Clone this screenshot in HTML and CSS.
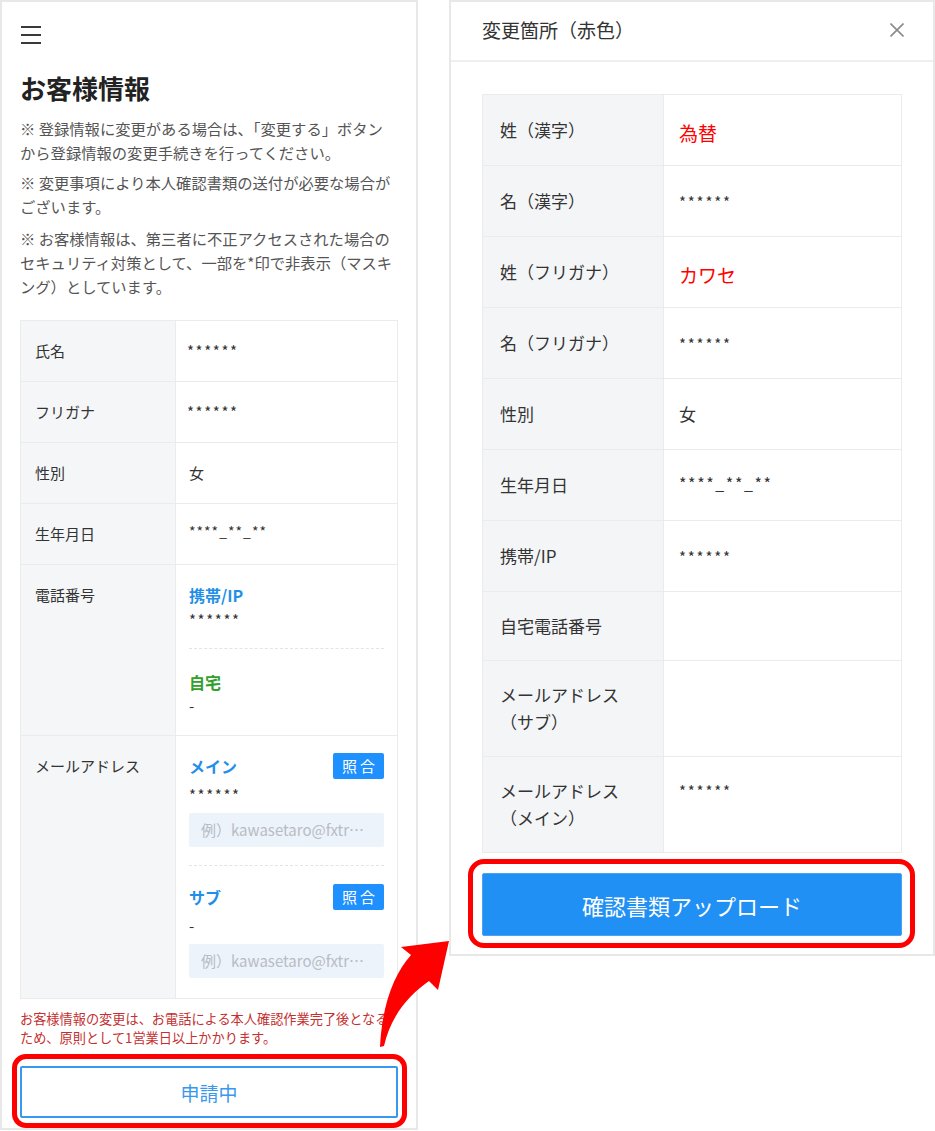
FILE: index.html
```html
<!DOCTYPE html>
<html lang="ja">
<head>
<meta charset="utf-8">
<title>お客様情報</title>
<link rel="stylesheet" href="styles.css">
</head>
<body>
<div class="page">
  <section class="panel panel-left">
    <div class="hamburger"><span></span><span></span><span></span></div>
    <h1 class="title">お客様情報</h1>
    <p class="note">※ 登録情報に変更がある場合は、「変更する」ボタンから登録情報の変更手続きを行ってください。</p>
    <p class="note note-2">※ 変更事項により本人確認書類の送付が必要な場合がございます。</p>
    <p class="note note-3">※ お客様情報は、第三者に不正アクセスされた場合のセキュリティ対策として、一部を*印で非表示（マスキング）としています。</p>

    <div class="info">
      <div class="row">
        <div class="lbl">氏名</div>
        <div class="val"><span class="mask">******</span></div>
      </div>
      <div class="row">
        <div class="lbl">フリガナ</div>
        <div class="val"><span class="mask">******</span></div>
      </div>
      <div class="row">
        <div class="lbl">性別</div>
        <div class="val val-plain">女</div>
      </div>
      <div class="row">
        <div class="lbl">生年月日</div>
        <div class="val val-plain"><span class="mask-small">****_**_**</span></div>
      </div>
      <div class="row">
        <div class="lbl">電話番号</div>
        <div class="val val-group">
          <div class="sub-head blue">携帯/IP</div>
          <div class="sub-val mask phone-val">******</div>
          <div class="divider"></div>
          <div class="sub-head green">自宅</div>
          <div class="sub-val">-</div>
        </div>
      </div>
      <div class="row">
        <div class="lbl">メールアドレス</div>
        <div class="val val-group val-mail">
          <div class="sub-head blue mail-head"><span>メイン</span><span class="chip">照合</span></div>
          <div class="sub-val mask mail-val">******</div>
          <div class="field">例）kawasetaro@fxtr…</div>
          <div class="divider divider-mail"></div>
          <div class="sub-head blue mail-head"><span>サブ</span><span class="chip">照合</span></div>
          <div class="sub-val mail-val">-</div>
          <div class="field">例）kawasetaro@fxtr…</div>
        </div>
      </div>
    </div>

    <p class="warn">お客様情報の変更は、お電話による本人確認作業完了後となるため、原則として1営業日以上かかります。</p>

    <div class="hl hl-left">
      <button class="btn-outline" type="button">申請中</button>
    </div>
  </section>

  <section class="panel panel-right">
    <header class="modal-head">
      <span class="modal-title">変更箇所（赤色）</span>
      <svg class="close" width="14" height="14" viewBox="0 0 14 14" aria-hidden="true">
        <path d="M0.5 0.5 L13.5 13.5 M13.5 0.5 L0.5 13.5" stroke="#8a8a8a" stroke-width="1.6" fill="none"/>
      </svg>
    </header>
    <div class="modal-body">
      <div class="diff">
        <div class="drow">
          <div class="dlbl">姓（漢字）</div>
          <div class="dval changed">為替</div>
        </div>
        <div class="drow">
          <div class="dlbl">名（漢字）</div>
          <div class="dval"><span class="mask">******</span></div>
        </div>
        <div class="drow">
          <div class="dlbl">姓（フリガナ）</div>
          <div class="dval changed">カワセ</div>
        </div>
        <div class="drow">
          <div class="dlbl">名（フリガナ）</div>
          <div class="dval"><span class="mask">******</span></div>
        </div>
        <div class="drow">
          <div class="dlbl">性別</div>
          <div class="dval">女</div>
        </div>
        <div class="drow">
          <div class="dlbl">生年月日</div>
          <div class="dval"><span class="mask-small">****_**_**</span></div>
        </div>
        <div class="drow">
          <div class="dlbl">携帯/IP</div>
          <div class="dval"><span class="mask">******</span></div>
        </div>
        <div class="drow drow-short">
          <div class="dlbl">自宅電話番号</div>
          <div class="dval"></div>
        </div>
        <div class="drow drow-two">
          <div class="dlbl">メールアドレス<br>（サブ）</div>
          <div class="dval"></div>
        </div>
        <div class="drow drow-two">
          <div class="dlbl">メールアドレス<br>（メイン）</div>
          <div class="dval"><span class="mask">******</span></div>
        </div>
      </div>
      <div class="hl hl-right">
        <button class="btn-primary" type="button">確認書類アップロード</button>
      </div>
    </div>
  </section>

  <svg class="arrow" width="935" height="1131" viewBox="0 0 935 1131" aria-hidden="true">
    <path d="M380 1047 C382 1005 394 974 411 955 L401 947 L449 941 L438 990 L429 981 C410 994 391 1015 384 1046 Z" fill="#ff0000"/>
  </svg>
</div>
</body>
</html>
```

FILE: styles.css
```css
* {
  box-sizing: border-box;
}

html, body {
  margin: 0;
  padding: 0;
  background: #ffffff;
}

body {
  font-family: "Noto Sans CJK JP", "Noto Sans", sans-serif;
  color: #333333;
}

.page {
  position: relative;
  width: 935px;
  height: 1131px;
  display: flex;
  align-items: flex-start;
  overflow: hidden;
}

.panel {
  border: 2px solid #e8e8e8;
  background: #ffffff;
}

/* ---------- left panel ---------- */
.panel-left {
  width: 418px;
  flex: none;
  padding: 0 18px 10px 18px;
}

.hamburger {
  margin-top: 24px;
  margin-left: 1px;
  width: 20px;
  display: flex;
  flex-direction: column;
  gap: 6px;
}

.hamburger span {
  display: block;
  height: 2px;
  background: #3a3a3a;
}

.title {
  margin: 26px 0 0 0;
  font-size: 26px;
  line-height: 36px;
  font-weight: 700;
  color: #222222;
}

.note {
  margin: 10px 0 0 0;
  font-size: 15.3px;
  line-height: 24px;
  color: #555555;
}

.note-2 {
  margin-top: 6px;
}

.note-3 {
  margin-top: 8px;
}

.info {
  margin-top: 22px;
  border: 1px solid #ebebeb;
}

.row {
  display: grid;
  grid-template-columns: 155px minmax(0, 1fr);
  border-top: 1px solid #ebebeb;
}

.row:first-child {
  border-top: none;
}

.lbl {
  background: #f5f6f8;
  border-right: 1px solid #ebebeb;
  padding: 19px 8px 19px 14px;
  font-size: 15px;
  line-height: 22px;
  color: #333333;
}

.val {
  min-width: 0;
  padding: 19px 13px 19px 11px;
  font-size: 15px;
  line-height: 22px;
  color: #333333;
}

.val-plain {
  padding-left: 13px;
}

.mask {
  letter-spacing: 1.6px;
}

.mask-small {
  font-size: 14px;
  line-height: 1;
  letter-spacing: 1px;
  position: relative;
  top: -3px;
}

.val-group {
  padding: 19px 13px 17px 13px;
}

.sub-head {
  font-size: 16px;
  line-height: 22px;
  font-weight: 700;
}

.blue {
  color: #1f8fe8;
}

.green {
  color: #33a02c;
}

.sub-val {
  margin-top: 1px;
  line-height: 24px;
  font-size: 15px;
  color: #333333;
}

.phone-val {
  margin-top: 2px;
}

.divider {
  margin: 16px 0 22px 0;
  border-top: 1px dashed #e4e4e4;
}

.val-mail {
  padding-bottom: 20px;
}

.mail-head {
  height: 22px;
  display: flex;
  align-items: center;
  justify-content: space-between;
}

.chip {
  width: 51px;
  height: 26px;
  flex: none;
  display: flex;
  align-items: center;
  justify-content: center;
  padding-left: 3px;
  background: #1e90ff;
  color: #ffffff;
  border-radius: 2px;
  font-size: 15px;
  font-weight: 400;
  letter-spacing: 3px;
}

.mail-val {
  margin-top: 6px;
}

.field {
  margin-top: 6px;
  height: 34px;
  padding: 0 12px;
  background: #edf3fb;
  border-radius: 2px;
  color: #b8bcc4;
  font-size: 15px;
  line-height: 34px;
  white-space: nowrap;
  overflow: hidden;
}

.divider-mail {
  margin: 18px 0 20px 0;
}

.warn {
  margin: 10px 0 0 0;
  font-size: 13.2px;
  line-height: 19px;
  color: #c42f2f;
}

.hl {
  position: relative;
}

.hl::after {
  content: "";
  position: absolute;
  border: 5px solid #ff0000;
  pointer-events: none;
}

.hl-left {
  margin-top: 19px;
}

.hl-left::after {
  top: -12px;
  left: -8px;
  right: -9px;
  bottom: -10px;
  border-radius: 14px;
}

.btn-outline {
  display: block;
  width: 100%;
  height: 52px;
  border: 2px solid #3a98ec;
  border-radius: 2px;
  background: #ffffff;
  color: #3a98ec;
  font-family: inherit;
  font-size: 19px;
  padding: 0;
}

/* ---------- right panel ---------- */
.panel-right {
  width: 486px;
  flex: none;
  margin-left: 31px;
}

.modal-head {
  height: 60px;
  border-bottom: 2px solid #efefef;
  display: flex;
  align-items: center;
  justify-content: space-between;
  padding: 0 29px 3px 31px;
}

.modal-title {
  font-size: 19px;
  line-height: 26px;
  color: #333333;
}

.close {
  display: block;
}

.modal-body {
  padding: 32px 31px 18px 31px;
}

.diff {
  border: 1px solid #ebebeb;
}

.drow {
  display: grid;
  grid-template-columns: 181px minmax(0, 1fr);
  border-top: 1px solid #ebebeb;
}

.drow:first-child {
  border-top: none;
}

.dlbl {
  background: #f4f5f7;
  border-right: 1px solid #ebebeb;
  padding: 21px 8px 22px 17px;
  font-size: 17px;
  line-height: 27px;
  color: #333333;
}

.drow-short .dlbl {
  padding-top: 20px;
  padding-bottom: 21px;
}

.drow-two .dlbl {
  padding-top: 20px;
  padding-bottom: 21px;
}

.dval {
  padding: 21px 12px 22px 15px;
  font-size: 17px;
  line-height: 27px;
  color: #333333;
}

.dval .mask {
  font-size: 15px;
  line-height: 1;
  letter-spacing: 1.8px;
}

.dval .mask-small {
  font-size: 16px;
  letter-spacing: 1.6px;
  top: -2px;
}

.drow-two .dval {
  padding-top: 19px;
}

.changed {
  color: #ff0000;
  font-size: 19px;
  padding-top: 24px;
  padding-bottom: 19px;
}

.hl-right {
  margin-top: 20px;
}

.hl-right::after {
  top: -14px;
  left: -14px;
  right: -13px;
  bottom: -12px;
  border-radius: 16px;
}

.btn-primary {
  display: block;
  width: 100%;
  height: 63px;
  border: 1px solid #4aa3f5;
  border-radius: 2px;
  background: #2090f4;
  color: #ffffff;
  font-family: inherit;
  font-size: 22px;
  padding: 0;
}

/* ---------- annotation arrow ---------- */
.arrow {
  position: absolute;
  left: 0;
  top: 0;
  pointer-events: none;
}
```
